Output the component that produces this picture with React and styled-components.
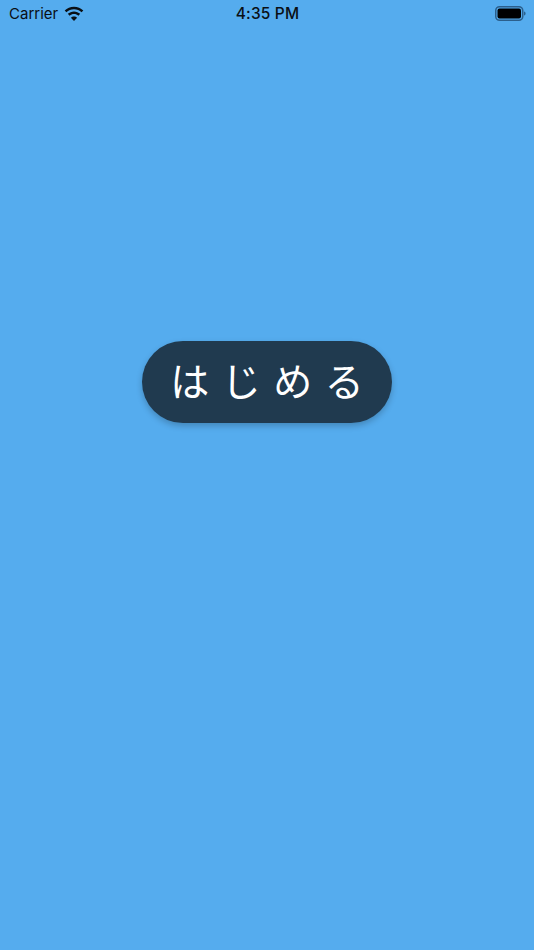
import React from "react";
import styled, { createGlobalStyle } from "styled-components";

const GlobalStyle = createGlobalStyle`
    html, body {
        margin: 0;
        padding: 0;
        height: 100%;
        background-color: #55ACEE;
    }
    #root {
        height: 100%;
    }
`;

const Screen = styled.div`
    height: 950px;
    display: flex;
    flex-direction: column;
    background-color: #55ACEE;
    font-family: 'Inter', 'Liberation Sans', sans-serif;
    overflow: hidden;
`;

const StatusBar = styled.div`
    height: 27px;
    display: grid;
    grid-template-columns: 1fr auto 1fr;
    align-items: center;
    padding: 0 8px 0 9px;
    color: #0a0f14;
`;

const StatusLeft = styled.div`
    display: flex;
    align-items: center;
    gap: 6px;
`;

const StatusRight = styled.div`
    display: flex;
    justify-content: flex-end;
    align-items: center;
`;

const Carrier = styled.span`
    font-size: 15px;
    font-weight: 400;
`;

const Clock = styled.span`
    font-size: 15.5px;
    font-weight: 500;
    letter-spacing: 0.15px;
`;

const Main = styled.div`
    flex: 1;
    display: flex;
    justify-content: center;
    padding-top: 314px;
`;

const StartButton = styled.button`
    width: 250px;
    height: 82px;
    border: none;
    border-radius: 41px;
    background-color: #203A4F;
    box-shadow: 0 3px 6px rgba(0, 0, 0, 0.22);
    color: #FFFFFF;
    font-family: 'Noto Sans CJK JP', sans-serif;
    font-size: 39px;
    font-weight: 400;
    line-height: 1;
    letter-spacing: 12.5px;
    padding: 0 0 6px 12.5px;
    cursor: pointer;
`;

function WifiIcon() {
    return (
        <svg width="20" height="15" viewBox="0 0 20 15">
            <path d="M10 .7c3.600 0 6.900 1.400 9.300 3.700l-1.700 1.900C15.600 4.400 12.900 3.300 10 3.300S4.400 4.400 2.400 6.300L.7 4.400C3.100 2.100 6.400.7 10 .7z" fill="#0a0f14" />
            <path d="M10 5.400c2.400 0 4.500.9 6.200 2.400l-1.800 1.900C13.200 8.700 11.700 8 10 8s-3.200.7-4.400 1.700L3.800 7.800C5.500 6.300 7.600 5.400 10 5.400z" fill="#0a0f14" />
            <path d="M10 10.500c1.200 0 2.300.5 3.100 1.200L10 15l-3.100-3.300c.8-.7 1.900-1.200 3.100-1.200z" fill="#0a0f14" />
        </svg>
    );
}

function BatteryIcon() {
    return (
        <svg width="31" height="15" viewBox="0 0 31 15">
            <rect x="0.750" y="0.750" width="27" height="13.500" rx="3.800" fill="none" stroke="#2b5f8c" strokeWidth="1.500" />
            <rect x="2.500" y="2.500" width="23.500" height="10" rx="2" fill="#000000" />
            <path d="M29 5.500c1 .3 1.600 1.100 1.600 2s-.6 1.700-1.600 2z" fill="#2b5f8c" />
        </svg>
    );
}

function App() {
    return (
        <>
            <GlobalStyle />
            <Screen>
                <StatusBar>
                    <StatusLeft>
                        <Carrier>Carrier</Carrier>
                        <WifiIcon />
                    </StatusLeft>
                    <Clock>4:35 PM</Clock>
                    <StatusRight>
                        <BatteryIcon />
                    </StatusRight>
                </StatusBar>
                <Main>
                    <StartButton>はじめる</StartButton>
                </Main>
            </Screen>
        </>
    );
}

export default App;
